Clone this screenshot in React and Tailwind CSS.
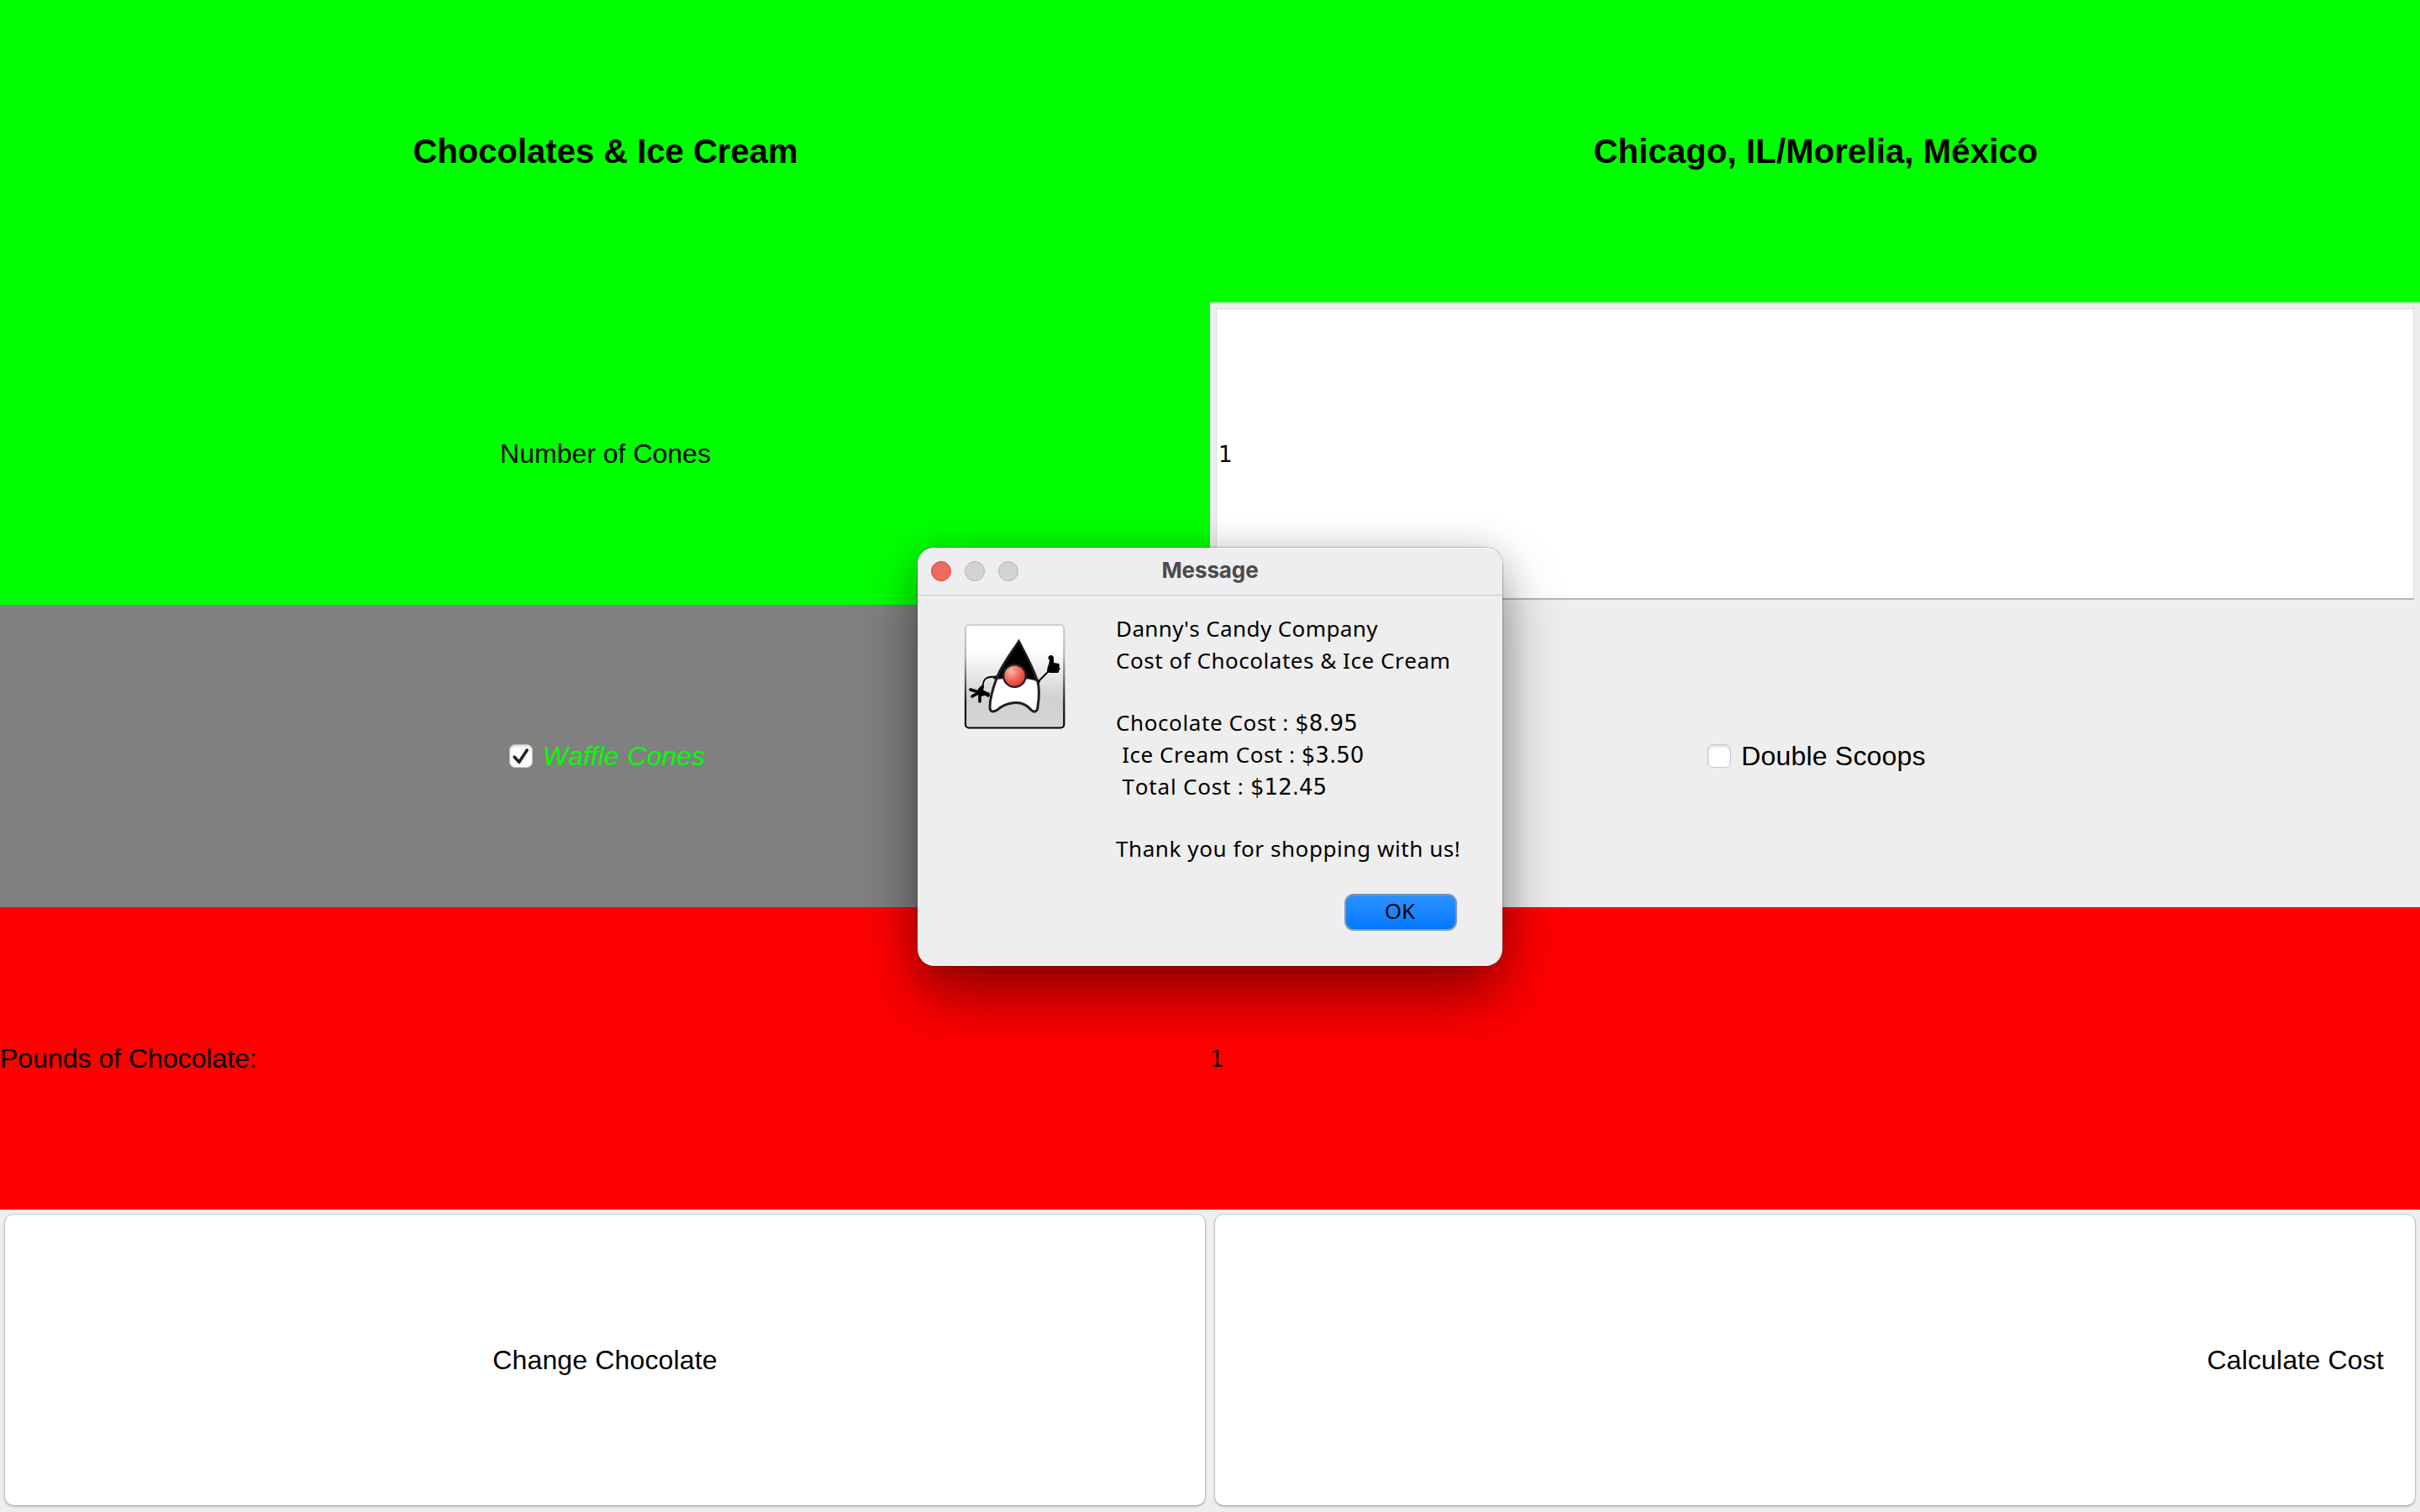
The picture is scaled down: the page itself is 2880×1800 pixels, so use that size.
const uiFont = "font-['Noto_Sans',sans-serif]";
const digitFont = "font-['DejaVu_Sans',sans-serif]";
const arial = "font-['Liberation_Sans',Arial,sans-serif]";

function CheckBox({ checked }) {
  return (
    <span className="flex h-[28px] w-[28px] items-center justify-center rounded-[7px] border border-[#c4c4c4] bg-white shadow-[inset_0_2px_3px_rgba(0,0,0,0.14)]">
      {checked && (
        <svg viewBox="0 0 28 28" className="h-[28px] w-[28px] shrink-0" fill="none">
          <path d="M6.2 15.2 L11.8 21.3 L21.2 7" stroke="#262626" strokeWidth="3.6" strokeLinecap="round" strokeLinejoin="round" />
        </svg>
      )}
    </span>
  );
}

function Duke() {
  return (
    <svg viewBox="0 0 160 150" className="mt-[1px] h-[150px] w-[160px]" fill="none">
      <defs>
        <linearGradient id="plate" x1="0" y1="0" x2="0" y2="1">
          <stop offset="0.25" stopColor="#fff" />
          <stop offset="0.72" stopColor="#d0d0d0" />
          <stop offset="1" stopColor="#d6d6d6" />
        </linearGradient>
        <linearGradient id="rim" x1="0" y1="0" x2="0" y2="1">
          <stop offset="0" stopColor="#cfcfcf" />
          <stop offset="0.3" stopColor="#b5b5b5" />
          <stop offset="0.75" stopColor="#1a1a1a" />
          <stop offset="1" stopColor="#000" />
        </linearGradient>
        <radialGradient id="nose" cx="0.35" cy="0.3" r="0.75">
          <stop offset="0" stopColor="#f8b9a4" />
          <stop offset="0.5" stopColor="#ee6a5c" />
          <stop offset="1" stopColor="#e32b27" />
        </radialGradient>
      </defs>
      <rect x="19" y="14" width="117.3" height="122.5" rx="4" fill="url(#plate)" stroke="url(#rim)" strokeWidth="2.2" />
      <path d="M54 76 C46 75 39 77 40 88" stroke="#000" strokeWidth="1.8" />
      <path d="M52 75 L57 74 L56 79 L52 78 Z" fill="#000" />
      <path d="M35 94 L25 91 M34 95 L27 99 M36 95 L36 105 M38 92 L46 98" stroke="#000" strokeWidth="3.6" strokeLinecap="round" />
      <path d="M34 90 L39 85 L41 88 L40 92 L48 95 L47 99 L42 98 L38 99 L33 97 Z" fill="#000" />
      <path d="M105 82 L118 69" stroke="#000" strokeWidth="1.9" />
      <path d="M103 78 L108 80 L107 84 L103 84 Z" fill="#000" />
      <path d="M118.5 51 C121 49 124 50.500 124 54 L124 59 L130 60 C131.500 62 130.500 63 130.500 64.500 C132.500 66 131.500 67.500 130 68 C131 70 129.500 71.500 127 71 L119 71 L116 69 C116 64 119 60 119 56 C117 54 117 52 118.500 51 Z" fill="#000" />
      <path d="M82.500 33.500 C73 48 63 61 57 75 C52 88 48 102 48 112 C48 118 52 118 57 115 C66 107 85 101 97 115 C101 119 105 117 105 111 C107 100 107 86 104 79 C98 62 90 48 82.500 33.500 Z" fill="#fff" stroke="#231f20" strokeWidth="3" strokeLinejoin="miter" />
      <path d="M82.500 34 C73 48 63 61 57 78 C66 77 94 76 103 80 C98 62 90 48 82.500 34 Z" fill="#000" stroke="#231f20" strokeWidth="1.5" />
      <circle cx="77.500" cy="74.600" r="13.300" fill="url(#nose)" stroke="#231f20" strokeWidth="2.400" />
    </svg>
  );
}

const lines = [
  { text: "Danny's Candy Company", cls: "h-[38px] tracking-[0.4px]" },
  { text: "Cost of Chocolates & Ice Cream", cls: "h-[38px] tracking-[0.53px]" },
  { text: "", cls: "h-[36px]" },
  { text: "Chocolate Cost : ", amount: "$8.95", cls: "h-[38px] tracking-[0.6px]" },
  { text: " Ice Cream Cost : ", amount: "$3.50", cls: "h-[38px] tracking-[0.52px]" },
  { text: " Total Cost : ", amount: "$12.45", cls: "h-[38px] tracking-[0.8px]" },
  { text: "", cls: "h-[36px]" },
  { text: "Thank you for shopping with us!", cls: "h-[38px] tracking-[0.58px]" },
];

function MessageDialog() {
  return (
    <section className="absolute left-[1092px] top-[652px] flex h-[498px] w-[696px] flex-col rounded-[20px] bg-[#eeeeee] shadow-[0_0_0_1px_rgba(0,0,0,0.22),0_36px_70px_rgba(0,0,0,0.42),0_0_40px_rgba(0,0,0,0.12)]">
      <header className="grid h-[57px] shrink-0 grid-cols-[1fr_auto_1fr] items-center rounded-t-[20px] border-b border-[#c6c6c8] bg-[#eeedef] px-[16px] shadow-[inset_0_1px_0_#fbfbfb]">
        <div className="flex gap-[16px]">
          <span className="h-[24px] w-[24px] rounded-full border border-[#d2503f] bg-[#ec6a5e]" />
          <span className="h-[24px] w-[24px] rounded-full border border-[#b5b4b6] bg-[#d3d2d4]" />
          <span className="h-[24px] w-[24px] rounded-full border border-[#b5b4b6] bg-[#d3d2d4]" />
        </div>
        <h2 className="pb-[2px] font-['Inter',sans-serif] text-[26px] leading-[32px] font-bold tracking-[-0.1px] text-[#4b4a4c]">Message</h2>
      </header>
      <div className="flex h-[318px] pl-[38px] pt-[20px]">
        <div className="w-[198px]"><Duke /></div>
        <div className={`${uiFont} text-[26px] leading-[38px] whitespace-pre text-black`}>
          {lines.map(({ text, amount, cls }, i) => (
            <p key={i} className={cls}>
              {text}
              {amount && <span className={`${digitFont} tracking-normal`}>{amount}</span>}
            </p>
          ))}
        </div>
      </div>
      <footer className="flex justify-end pr-[54px] pt-[37px]">
        <button className={`${uiFont} flex h-[44px] w-[134px] items-center justify-center rounded-[11px] border-2 border-[#7f98b3] bg-gradient-to-b from-[#2a90ff] to-[#007aff] pr-[2px] pb-[3px] text-[26px] text-black`}>OK</button>
      </footer>
    </section>
  );
}

const swingButton = "flex h-[346px] items-center rounded-[10px] bg-white shadow-[0_0_0_1px_rgba(0,0,0,0.08),0_1px_3px_rgba(0,0,0,0.35)]";

export default function App() {
  return (
    <main className={`${arial} relative h-[1800px] w-[2880px] overflow-hidden bg-[#eeeeee] text-[32px] text-black [font-kerning:none]`}>
      <div className="grid h-full grid-cols-2 grid-rows-5">
        <h1 className="flex items-center justify-center bg-[#00ff00] pl-[1px] text-[40px] font-bold"><span>Chocolates &amp; Ice Cream</span></h1>
        <h1 className="flex items-center justify-center bg-[#00ff00] pl-[2px] text-[40px] font-bold"><span className="tracking-[0.16px]">Chicago, IL/Morelia, México</span></h1>

        <div className="flex items-center justify-center bg-[#00ff00] pl-[1px]"><span>Number of Cones</span></div>
        <div className="bg-[#eeeeee] px-[7px] pt-[7px] pb-[6px]">
          <div className={`${digitFont} flex h-full items-center border border-[#dcdcdc] border-b-2 border-b-[#b4b4b4] bg-white pt-[2px] pl-[2px] text-[26px]`}>1</div>
        </div>

        <label className="flex items-center justify-center gap-[12px] bg-[#808080] pl-[5px] text-[#00ff00] italic"><CheckBox checked /><span className="[word-spacing:1px]">Waffle Cones</span></label>
        <label className="flex items-center justify-center gap-[12px] bg-[#eeeeee] pl-[4px]"><CheckBox /><span className="tracking-[0.2px]">Double Scoops</span></label>

        <div className="flex items-center bg-[#ff0000]"><span>Pounds of Chocolate:</span></div>
        <div className={`${digitFont} flex items-center bg-[#ff0000] pt-[2px] text-[26px]`}>1</div>

        <div className="px-[6px] pt-[6px]"><div className={`${swingButton} justify-center`}><span className="tracking-[0.15px]">Change Chocolate</span></div></div>
        <div className="px-[6px] pt-[6px]"><div className={`${swingButton} justify-end pr-[37px]`}><span className="tracking-[0.18px]">Calculate Cost</span></div></div>
      </div>
      <MessageDialog />
    </main>
  );
}
